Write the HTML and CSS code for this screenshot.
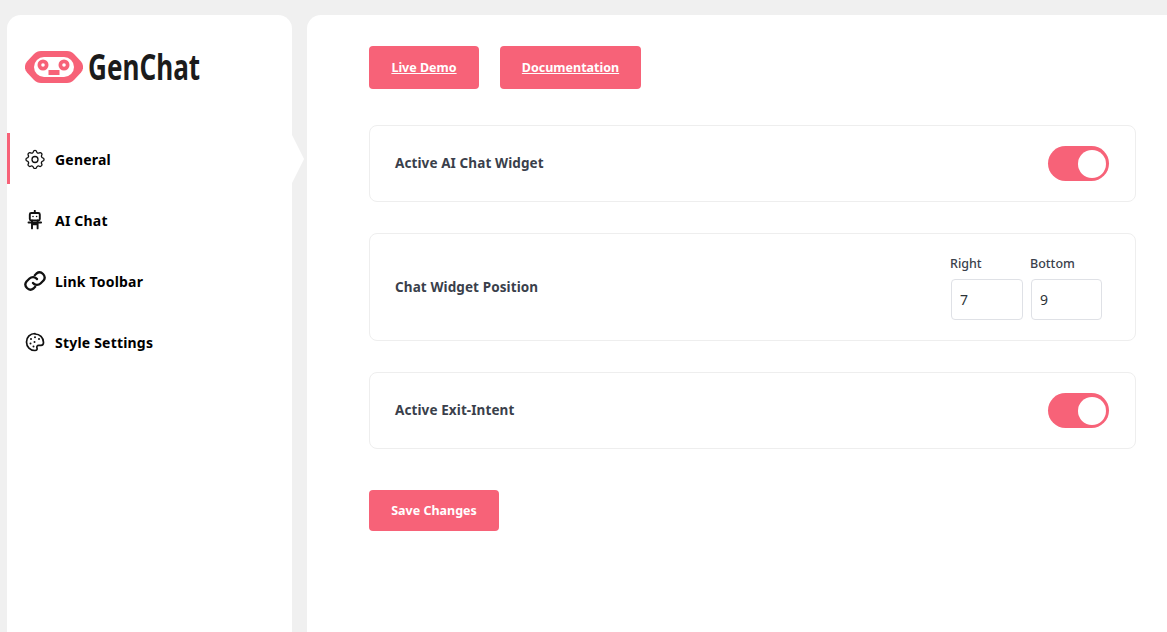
FILE: index.html
```html
<!DOCTYPE html>
<html lang="en">
<head>
<meta charset="utf-8">
<title>GenChat</title>
<link rel="stylesheet" href="styles.css">
</head>
<body>
<div class="app">
  <aside class="sidebar">
    <div class="logo">
      <svg class="logo-mark" width="58" height="32" viewBox="0 0 58 32">
        <path d="M16 0H42C45 0 47 1 49 3L56 10.500C58.800 14 58.800 18 56 21.500L49 29C47 31 45 32 42 32H16C13 32 11 31 9 29L2 21.500C-.8 18-.8 14 2 10.500L9 3C11 1 13 0 16 0Z" fill="#f76278"/>
        <rect x="9" y="6" width="40" height="20" rx="10" fill="#fff"/>
        <circle cx="18" cy="14" r="5.500" fill="#f76278"/>
        <circle cx="18" cy="14" r="1.800" fill="#fff"/>
        <circle cx="39" cy="14" r="5.500" fill="#f76278"/>
        <circle cx="39" cy="14" r="1.800" fill="#fff"/>
        <rect x="23.500" y="19" width="11" height="5" fill="#f76278"/>
      </svg>
      <span class="logo-text">GenChat</span>
    </div>
    <nav class="nav">
      <a class="nav-item active">
        <svg class="nav-icon" width="20" height="20" viewBox="2 1.500 20 20" fill="none" stroke="#111" stroke-width="1.300" stroke-linecap="round" stroke-linejoin="round"><path d="M10.300 4.300c.4-1.800 3-1.800 3.400 0a1.700 1.700 0 0 0 2.600 1.100c1.500-.9 3.300.8 2.400 2.400a1.700 1.700 0 0 0 1 2.500c1.800.4 1.800 3 0 3.400a1.700 1.700 0 0 0-1 2.600c.9 1.500-.9 3.300-2.400 2.400a1.700 1.700 0 0 0-2.600 1c-.4 1.800-3 1.800-3.400 0a1.700 1.700 0 0 0-2.600-1c-1.500.9-3.300-.9-2.400-2.400a1.700 1.700 0 0 0-1-2.600c-1.800-.4-1.800-3 0-3.400a1.700 1.700 0 0 0 1-2.500c-.9-1.600.9-3.300 2.400-2.400 1 .6 2.300.1 2.600-1.100z"/><circle cx="12" cy="12" r="3"/></svg>
        <span>General</span>
      </a>
      <a class="nav-item">
        <svg class="nav-icon" width="20" height="20" viewBox="0 0 20 20" fill="none" stroke="#111" stroke-width="1.900" stroke-linecap="round" stroke-linejoin="round"><rect x="4.800" y="3" width="10" height="7.400" rx="1.500"/><path d="M9.800 .8v2M3.500 12.500H16.100M7 10.400v4h5.600v-4M7 14.400v4M12.600 14.400v4"/><circle cx="8" cy="6.500" r=".8" fill="#111" stroke="none"/><circle cx="11.600" cy="6.500" r=".8" fill="#111" stroke="none"/></svg>
        <span>AI Chat</span>
      </a>
      <a class="nav-item">
        <svg class="nav-icon nav-icon-link" width="24" height="24" viewBox="0 0 24 24" fill="none" stroke="#111" stroke-width="2.300" stroke-linecap="round" stroke-linejoin="round"><path d="M10 14a5 5 0 0 0 7.500.5l3-3a5 5 0 0 0-7-7l-1.700 1.700"/><path d="M14 10a5 5 0 0 0-7.500-.5l-3 3a5 5 0 0 0 7 7l1.700-1.700"/></svg>
        <span>Link Toolbar</span>
      </a>
      <a class="nav-item">
        <svg class="nav-icon" width="20" height="20" viewBox="0 0 20 20" fill="none" stroke="#111" stroke-width="1.700" stroke-linecap="round" stroke-linejoin="round"><path d="M10 1.500c-4.800 0-8.500 3.700-8.500 8.500s3.700 8.500 8.500 8.500c1.800 0 2.500-1.100 2-2.400-.6-1.500.2-2.800 1.800-2.800h2.200c1.500 0 2.500-1 2.500-2.800 0-5-3.800-8.500-8.500-8.500z"/><g fill="#111" stroke="none"><circle cx="6" cy="7" r="1"/><circle cx="10" cy="5.200" r="1"/><circle cx="14" cy="7" r="1"/><circle cx="5.500" cy="11.500" r="1"/><circle cx="9.500" cy="10" r="1"/><circle cx="8.500" cy="14.500" r="1"/></g></svg>
        <span>Style Settings</span>
      </a>
    </nav>
  </aside>
  <main class="main">
    <div class="top-links">
      <a class="btn btn-link btn-live">Live Demo</a>
      <a class="btn btn-link btn-docs">Documentation</a>
    </div>
    <section class="card">
      <span class="card-label">Active AI Chat Widget</span>
      <span class="toggle"><span class="knob"></span></span>
    </section>
    <section class="card card-tall">
      <span class="card-label">Chat Widget Position</span>
      <div class="fields">
        <label class="field"><span class="field-label">Right</span><input class="field-input field-right" type="text" value="7"></label>
        <label class="field"><span class="field-label">Bottom</span><input class="field-input field-bottom" type="text" value="9"></label>
      </div>
    </section>
    <section class="card">
      <span class="card-label">Active Exit-Intent</span>
      <span class="toggle"><span class="knob"></span></span>
    </section>
    <button class="btn btn-save" type="button">Save Changes</button>
  </main>
</div>
</body>
</html>
```
FILE: styles.css
```css
* { box-sizing: border-box; }
html, body { height: 100%; }
body {
  margin: 0;
  background: #f0f0f0;
  font-family: "Noto Sans", "Open Sans", sans-serif;
  color: #3a3f4b;
  overflow: hidden;
}
.app {
  display: flex;
  gap: 15px;
  height: 632px;
  padding: 15px 0 0 7px;
}
.sidebar {
  flex: 0 0 285px;
  background: #fff;
  border-radius: 14px 14px 0 0;
  padding-top: 36px;
}
.logo {
  display: flex;
  align-items: center;
  gap: 5px;
  height: 32px;
  padding-left: 18px;
}
.logo-mark { flex: none; }
.logo-text {
  font-family: "Noto Sans", sans-serif;
  font-weight: 700;
  font-size: 36px;
  line-height: 32px;
  color: #1b1b1b;
  transform: scaleX(.725);
  transform-origin: left center;
}
.nav {
  display: flex;
  flex-direction: column;
  gap: 10px;
  margin-top: 50px;
}
.nav-item {
  position: relative;
  display: flex;
  align-items: center;
  height: 51px;
  padding-left: 18px;
  font-size: 14px;
  font-weight: 700;
  letter-spacing: .2px;
  color: #000;
}
.nav-item span { padding-top: 2px; }
.nav-icon {
  flex: none;
  margin-right: 10px;
}
.nav-icon-link { margin-left: -2.500px; margin-right: 8.500px; }
.nav-item.active { border-left: 3px solid #f76278; padding-left: 15px; }
.nav-item.active::after {
  content: "";
  position: absolute;
  left: 282px;
  top: 2px;
  border-top: 24px solid transparent;
  border-bottom: 24px solid transparent;
  border-left: 12px solid #fff;
}
.main {
  flex: 1;
  min-width: 0;
  background: #fff;
  border-radius: 14px 0 0 0;
  padding: 31px 31px 0 62px;
}
.top-links {
  display: flex;
  gap: 21px;
  margin-bottom: 36px;
}
.btn {
  display: flex;
  align-items: center;
  justify-content: center;
  border: 0;
  border-radius: 4px;
  background: #f76278;
  color: #fff;
  font-family: inherit;
  font-size: 12.500px;
  font-weight: 700;
}
.btn-link { height: 43px; text-decoration: underline; }
.btn-live { width: 110px; }
.btn-docs { width: 141px; }
.btn-save { width: 130px; height: 41px; margin-top: 41px; }
.card {
  display: flex;
  align-items: center;
  justify-content: space-between;
  height: 77px;
  margin-bottom: 31px;
  padding: 0 26px 0 25px;
  border: 1px solid #eeeeee;
  border-radius: 8px;
}
.card:nth-of-type(3) { margin-bottom: 0; }
.card-tall { height: 108px; }
.card-label {
  padding-bottom: 2px;
  font-size: 13.500px;
  font-weight: 700;
  letter-spacing: .1px;
  color: #3a3f4b;
}
.card-tall .card-label { padding-bottom: 0; }
.toggle {
  display: flex;
  align-items: center;
  justify-content: flex-end;
  width: 61px;
  height: 35px;
  padding-right: 3px;
  background: #f76278;
  border-radius: 18px;
}
.knob {
  width: 28px;
  height: 28px;
  background: #fff;
  border-radius: 50%;
}
.fields {
  display: flex;
  gap: 8px;
  margin-right: 7px;
}
.field {
  display: flex;
  flex-direction: column;
  align-items: flex-start;
}
.field-label {
  margin: 0 0 6px -1px;
  font-size: 12.500px;
  line-height: 18px;
  font-weight: 500;
  color: #3a3f4b;
}
.field-input {
  height: 41px;
  padding: 0 8px;
  border: 1px solid #dfe1e6;
  border-radius: 4px;
  background: #fff;
  font-family: inherit;
  font-size: 14px;
  color: #2c3338;
  outline: none;
}
.field-right { width: 72px; }
.field-bottom { width: 71px; }
```
